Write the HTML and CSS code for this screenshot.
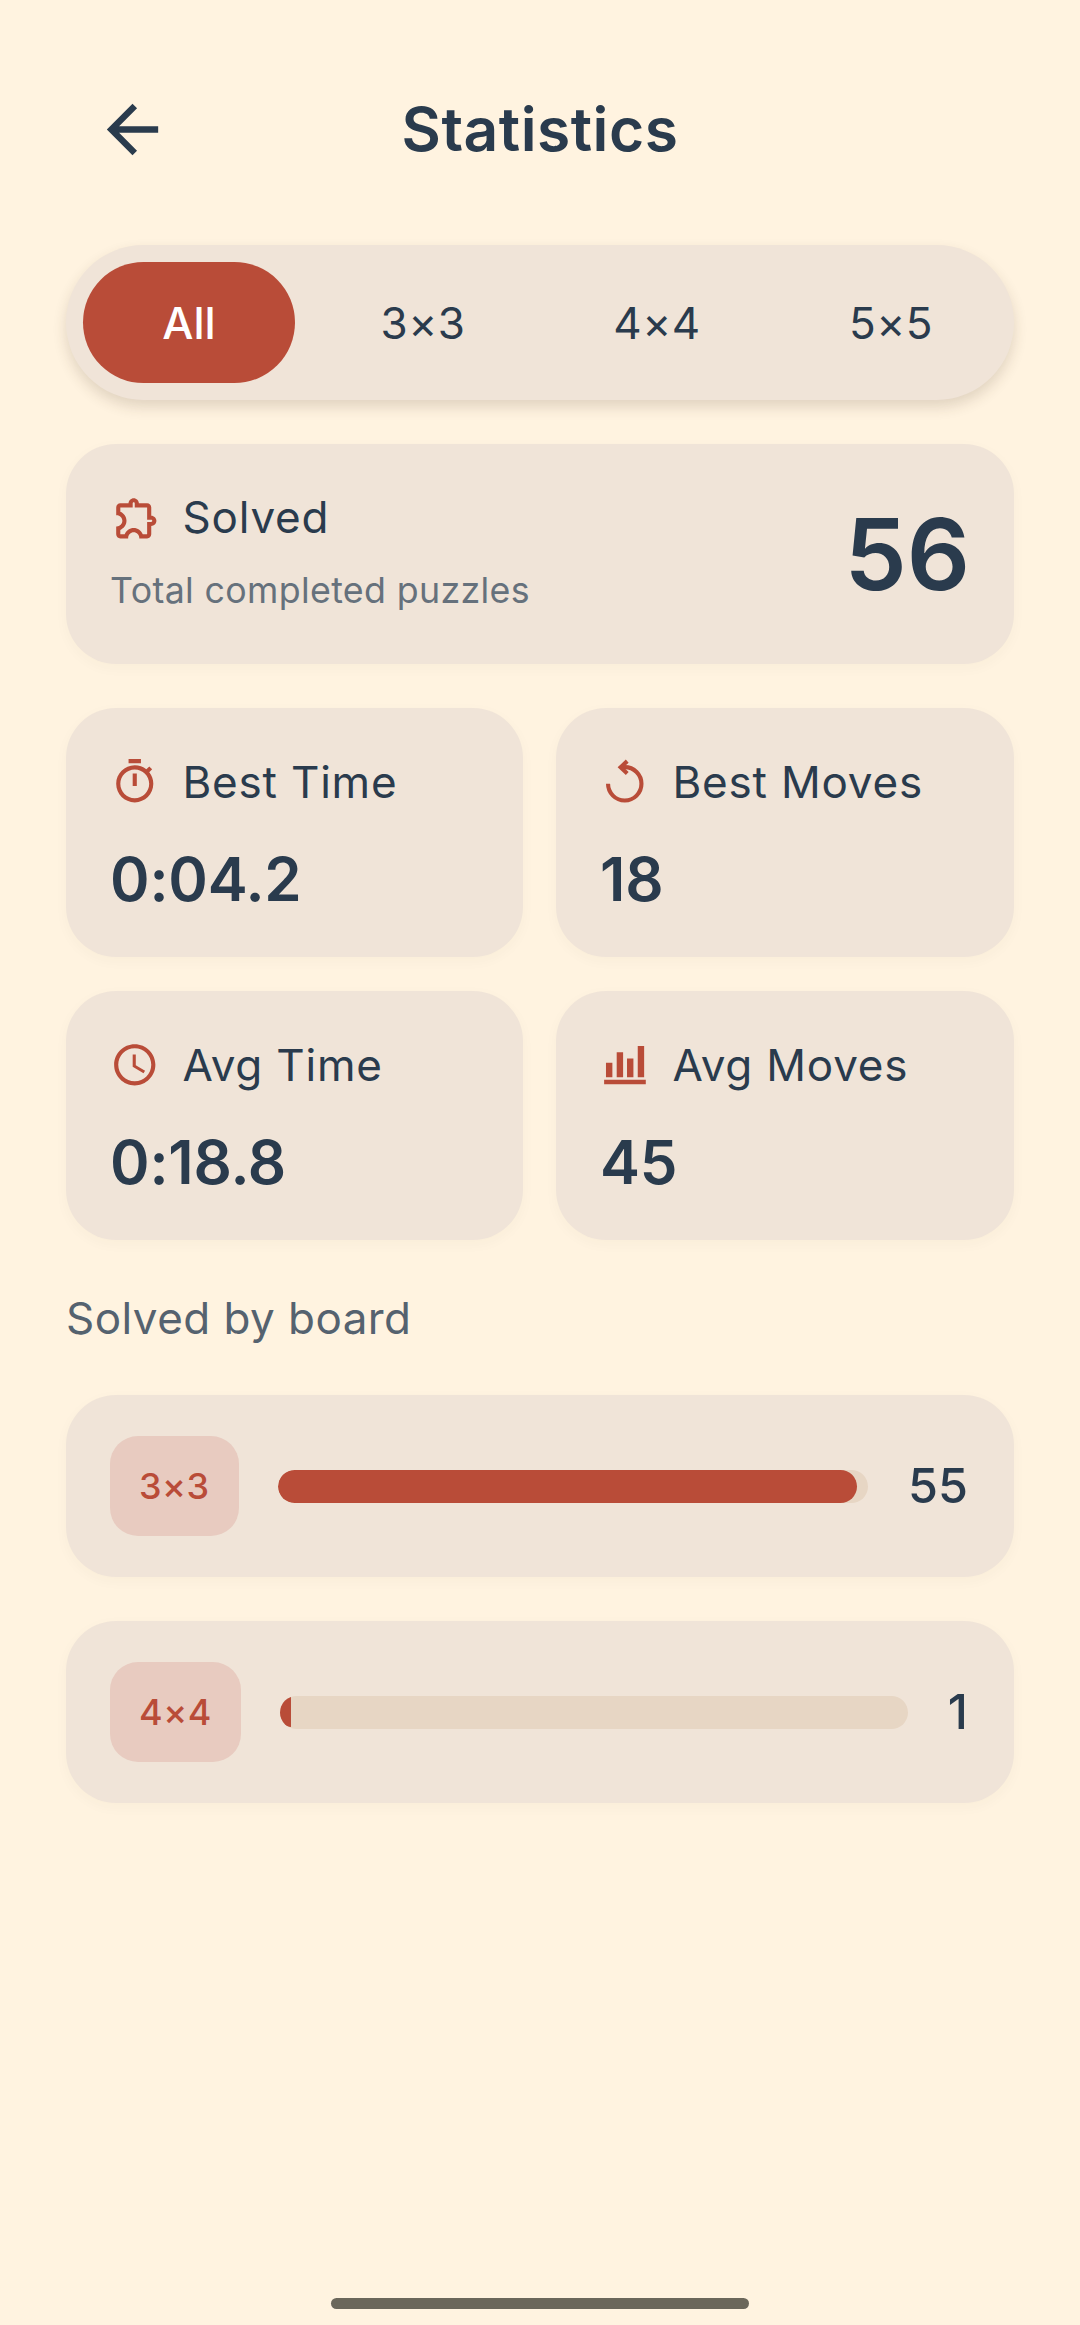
FILE: index.html
```html
<!DOCTYPE html>
<html lang="en">
<head>
<meta charset="utf-8">
<title>Statistics</title>
<link rel="stylesheet" href="styles.css">
</head>
<body>
<main class="screen">
  <header class="topbar">
    <svg class="back" viewBox="0 0 24 24" aria-hidden="true"><path d="M20 11H7.830l5.590-5.590L12 4l-8 8 8 8 1.410-1.410L7.830 13H20v-2z"/></svg>
    <h1 class="title">Statistics</h1>
  </header>

  <nav class="tabs">
    <span class="tab active">All</span>
    <span class="tab">3×3</span>
    <span class="tab">4×4</span>
    <span class="tab">5×5</span>
  </nav>

  <section class="card solved">
    <div class="solved-text">
      <div class="label-row">
        <svg class="icon" viewBox="-1 0 24 24" aria-hidden="true"><path class="solid" d="M10.500 4.500c.28 0 .5.22.5.5v2h6v6h2c.28 0 .5.22.5.5s-.22.5-.5.5h-2v6h-2.120c-.68-1.750-2.390-3-4.380-3s-3.700 1.250-4.380 3H4v-2.120c1.750-.68 3-2.390 3-4.380 0-1.990-1.240-3.700-2.990-4.380L4 7h6V5c0-.28.22-.5.5-.5m0-2C9.120 2.500 8 3.620 8 5H4c-1.100 0-1.990.9-1.990 2v3.800h.29c1.490 0 2.700 1.210 2.700 2.700s-1.210 2.700-2.700 2.700H2V20c0 1.100.9 2 2 2h3.800v-.3c0-1.490 1.210-2.700 2.700-2.700s2.700 1.210 2.700 2.700v.3H17c1.100 0 2-.9 2-2v-4c1.380 0 2.500-1.120 2.500-2.500S20.380 11 19 11V7c0-1.100-.9-2-2-2h-4c0-1.380-1.120-2.500-2.500-2.500z"/></svg>
        <span class="label">Solved</span>
      </div>
      <p class="sub">Total completed puzzles</p>
    </div>
    <strong class="big">56</strong>
  </section>

  <section class="grid">
    <article class="card stat">
      <div class="label-row">
        <svg class="icon" viewBox="0 0 24 24" aria-hidden="true"><path class="solid" d="M15 1H9v2h6V1zm-4 13h2V8h-2v6zm8.030-6.610l1.420-1.420c-.43-.51-.9-.99-1.410-1.410l-1.420 1.420C16.070 4.740 14.120 4 12 4c-4.970 0-9 4.030-9 9s4.020 9 9 9 9-4.030 9-9c0-2.120-.74-4.070-1.970-5.610zM12 20c-3.870 0-7-3.130-7-7s3.130-7 7-7 7 3.130 7 7-3.130 7-7 7z"/></svg>
        <span class="label">Best Time</span>
      </div>
      <div class="value">0:04.2</div>
    </article>
    <article class="card stat">
      <div class="label-row">
        <svg class="icon" viewBox="0 0 24 24" aria-hidden="true"><path class="line" d="M3.900 13a8.100 8.100 0 1 0 8.100-8.100H10"/><path class="line" d="M13.200 2 10 5l3.200 3"/></svg>
        <span class="label">Best Moves</span>
      </div>
      <div class="value">18</div>
    </article>
    <article class="card stat">
      <div class="label-row">
        <svg class="icon" viewBox="0 0 24 24" aria-hidden="true"><path class="solid" d="M11.990 2C6.470 2 2 6.480 2 12s4.470 10 9.990 10C17.520 22 22 17.520 22 12S17.520 2 11.990 2zM12 20c-4.420 0-8-3.580-8-8s3.580-8 8-8 8 3.580 8 8-3.580 8-8 8zm.5-13H11v6l5.250 3.150.75-1.230-4.500-2.670z"/></svg>
        <span class="label">Avg Time</span>
      </div>
      <div class="value">0:18.8</div>
    </article>
    <article class="card stat">
      <div class="label-row">
        <svg class="icon" viewBox="0 0 24 24" aria-hidden="true"><path class="solid" d="M2 19.300h20.200v2.100H2zM2.900 11H6v7H2.900zM8.100 5.900h3.100V18H8.100zM13.100 9h3.100v9h-3.100zM18.300 2.900h3.100V18h-3.100z"/></svg>
        <span class="label">Avg Moves</span>
      </div>
      <div class="value">45</div>
    </article>
  </section>

  <h2 class="section-title">Solved by board</h2>

  <section class="board-list">
    <article class="card board">
      <span class="chip">3×3</span>
      <div class="track"><div class="fill" style="width:98.100%"></div></div>
      <span class="count">55</span>
    </article>
    <article class="card board">
      <span class="chip">4×4</span>
      <div class="track"><div class="fill thin" style="width:1.800%"></div></div>
      <span class="count">1</span>
    </article>
  </section>

  <div class="home-indicator"></div>
</main>
</body>
</html>
```
FILE: styles.css
```css
* { box-sizing: border-box; margin: 0; padding: 0; }
html, body { width: 1080px; height: 2325px; background: #fff3e0; overflow: hidden; }
body { font-family: Inter, "Noto Sans", sans-serif; color: #2a3b4d; }

.screen { height: 2325px; padding: 88px 66px 0; display: flex; flex-direction: column; }

.topbar { height: 83px; display: grid; grid-template-columns: 1fr auto 1fr; align-items: center; }
.back { width: 77px; height: 77px; margin-left: 28px; fill: #2a3b4d; }
.title { font-size: 60.500px; font-weight: 600; line-height: 83px; letter-spacing: .5px; }

.tabs { margin-top: 74px; height: 155px; padding: 17px; border-radius: 78px; background: #f0e4d8; display: flex; gap: 22px; box-shadow: 0 7px 14px rgba(70, 50, 30, .16); }
.tab { flex: 1; border-radius: 61px; display: flex; align-items: center; justify-content: center; font-size: 44px; letter-spacing: .5px; }
.tab.active { background: #b94c38; color: #fff; font-weight: 500; letter-spacing: 0; }

.card { background: #f0e4d8; border-radius: 50px; box-shadow: 0 4px 14px rgba(70, 50, 30, .03); }

.solved { margin-top: 44px; height: 220px; padding: 0 44px 0 44px; display: flex; align-items: center; justify-content: space-between; }
.solved-text { margin-bottom: 4px; }
.label-row { display: flex; align-items: center; gap: 23px; }
.icon { width: 49.500px; height: 49.500px; flex: none; }
.line { fill: none; stroke: #b94c38; stroke-width: 2; }
.solid { fill: #b94c38; }
.label { font-size: 44px; line-height: 50px; letter-spacing: .8px; }
.sub { margin-top: 25.500px; font-size: 35.750px; line-height: 44px; letter-spacing: .35px; color: #66717c; }
.big { font-size: 99px; font-weight: 600; line-height: 120px; }

.grid { margin-top: 44px; display: grid; grid-template-columns: 457px 458px; column-gap: 33px; row-gap: 34px; }
.stat { height: 249px; padding: 49px 44px 0; }
.value { margin-top: 36px; font-size: 60px; font-weight: 600; line-height: 72px; letter-spacing: -.2px; }

.section-title { margin-top: 50px; font-size: 44px; font-weight: 400; line-height: 56px; letter-spacing: .45px; color: #55626f; }

.board-list { margin-top: 49px; display: flex; flex-direction: column; gap: 44px; }
.board { height: 182px; padding: 0 46px 0 44px; display: flex; align-items: center; gap: 40px; }
.chip { height: 100px; padding: 0 29px; border-radius: 28px; background: #e8cbc0; color: #b94c38; display: flex; align-items: center; font-size: 36px; font-weight: 500; letter-spacing: .5px; margin-right: -1px; }
.track { flex: 1; height: 33px; border-radius: 17px; background: #e7d6c4; overflow: hidden; display: flex; align-items: center; }
.fill { height: 33px; border-radius: 17px; background: #b94c38; }
.fill.thin { height: 30px; border-radius: 15px 0 0 15px; }
.count { font-size: 48.500px; font-weight: 500; line-height: 56px; }

.home-indicator { align-self: center; margin-top: auto; margin-bottom: 16px; width: 418px; height: 11px; border-radius: 5.500px; background: #6b675b; }
```
